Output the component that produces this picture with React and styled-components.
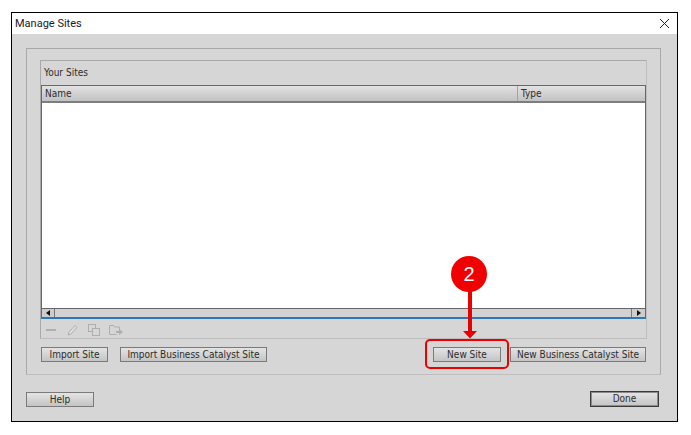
import styled, { createGlobalStyle } from "styled-components";

const GlobalStyle = createGlobalStyle`
  html, body {
    margin: 0;
    background: #fff;
  }
`;

const uiFont = `"DejaVu Sans Condensed", "DejaVu Sans", sans-serif`;

const Page = styled.div`
  position: relative;
  width: 691px;
  height: 435px;
  padding: 12px 0 0 11px;
  box-sizing: border-box;
  overflow: hidden;
`;

const Dialog = styled.div`
  width: 667px;
  height: 410px;
  box-sizing: border-box;
  border: 1px solid #000;
  background: #d6d6d6;
  display: flex;
  flex-direction: column;
  font-family: ${uiFont};
  font-size: 10px;
  color: #2c2c2c;
`;

const TitleBar = styled.div`
  height: 21px;
  flex: none;
  background: #fff;
  display: flex;
  align-items: center;
  justify-content: space-between;
  padding: 0 7px 0 3px;
  font-family: Roboto, sans-serif;
  font-size: 11px;
  color: #1a1a2a;
`;

const Content = styled.div`
  flex: 1;
  display: flex;
  flex-direction: column;
  padding: 14px 16px 0 14px;
`;

const OuterFrame = styled.div`
  height: 327px;
  box-sizing: border-box;
  border: 1px solid #a9a9a9;
  border-bottom-color: #bdbdbd;
  padding: 11px 13px 0 13px;
`;

const SitesPanel = styled.div`
  height: 279px;
  box-sizing: border-box;
  border: 1px solid #a9a9a9;
  border-bottom-color: #bdbdbd;
  border-right-color: #bdbdbd;
  display: flex;
  flex-direction: column;
`;

const PanelTitle = styled.div`
  height: 24px;
  flex: none;
  box-sizing: border-box;
  display: flex;
  align-items: center;
  padding: 0 0 2px 3px;
`;

const Table = styled.div`
  height: 234px;
  flex: none;
  box-sizing: border-box;
  border: 1px solid #2a78b8;
  border-bottom-width: 2px;
  background: #fff;
  display: flex;
  flex-direction: column;
`;

const HeaderRow = styled.div`
  height: 17px;
  flex: none;
  box-sizing: border-box;
  border-bottom: 2px solid #7d7d7d;
  background: linear-gradient(#e2e2e2, #c2c2c2);
  display: flex;
`;

const HeaderCell = styled.div`
  width: ${(p) => p.$width}px;
  flex: none;
  display: flex;
  align-items: center;
  padding-left: 3px;
  box-sizing: border-box;
  ${(p) => p.$divider && "border-left: 1px solid #a4a4a4;"}
`;

const Rows = styled.div`
  flex: 1;
`;

const ScrollBar = styled.div`
  height: 9px;
  flex: none;
  box-sizing: border-box;
  border-top: 1px solid #666;
  background: #d2d2d2;
  display: flex;
  justify-content: space-between;
`;

const ScrollButton = styled.div`
  width: ${(p) => (p.$side === "left" ? 13 : 14)}px;
  box-sizing: border-box;
  background: #cdcdcd;
  border-${(p) => (p.$side === "left" ? "right" : "left")}: 1px solid #777;
  display: flex;
  align-items: center;
  justify-content: center;
`;

const Arrow = styled.span`
  width: 0;
  height: 0;
  border-top: 3px solid transparent;
  border-bottom: 3px solid transparent;
  border-${(p) => (p.$side === "left" ? "right" : "left")}: 4px solid #111;
`;

const IconBar = styled.div`
  flex: 1;
  display: flex;
  align-items: center;
  gap: 9px;
  padding: 2px 0 0 5px;
  color: #aeaeae;
`;

const ButtonRow = styled.div`
  display: flex;
  justify-content: space-between;
  margin: 8px 1px 0 1px;
`;

const ButtonGroup = styled.div`
  display: flex;
  gap: ${(p) => p.$gap}px;
`;

const Button = styled.button`
  width: ${(p) => p.$width}px;
  height: ${(p) => (p.$primary ? 16 : 15)}px;
  padding: 0;
  box-sizing: border-box;
  white-space: nowrap;
  border: 1px solid ${(p) => (p.$primary ? "#3a3a3a" : "#7a7a7a")};
  box-shadow: ${(p) => (p.$primary ? "inset 0 0 0 1px #8c8c8c" : "none")};
  background: linear-gradient(#e4e4e4, #c4c4c4);
  font-family: ${uiFont};
  font-size: 10px;
  line-height: 1;
  color: #2c2c2c;
`;

const Footer = styled.div`
  display: flex;
  justify-content: space-between;
  align-items: flex-end;
  margin: 16px 2px 0 0;
`;

const CalloutBubble = styled.div`
  position: absolute;
  left: 451px;
  top: 256px;
  width: 36px;
  height: 36px;
  border-radius: 50%;
  background: #f00000;
  color: #fff;
  font-family: "Liberation Sans", sans-serif;
  font-size: 20px;
  display: flex;
  align-items: center;
  justify-content: center;
`;

const CalloutArrow = styled.svg`
  position: absolute;
  left: 463px;
  top: 290px;
`;

const CalloutBox = styled.div`
  position: absolute;
  left: 425px;
  top: 339px;
  width: 84px;
  height: 30px;
  box-sizing: border-box;
  border: 2px solid #ee0000;
  border-radius: 5px;
`;

const CloseIcon = () => (
  <svg width="11" height="11" viewBox="0 0 11 11">
    <path d="M1 1l9 9M10 1l-9 9" stroke="#222" strokeWidth="1" fill="none" />
  </svg>
);

const RemoveIcon = () => (
  <svg width="12" height="12" viewBox="0 0 12 12">
    <rect x="0" y="5" width="10" height="2" fill="currentColor" />
  </svg>
);

const EditIcon = () => (
  <svg width="12" height="12" viewBox="0 0 12 12">
    <path d="M1 11l1-3 6-6.500 2 2-6 6.500z" fill="#dedede" stroke="currentColor" />
  </svg>
);

const DuplicateIcon = () => (
  <svg width="12" height="12" viewBox="0 0 12 12">
    <rect x="0.5" y="0.5" width="7" height="7" fill="none" stroke="currentColor" />
    <rect x="4.5" y="4.500" width="7" height="7" fill="#d6d6d6" stroke="currentColor" />
  </svg>
);

const ExportIcon = () => (
  <svg width="14" height="12" viewBox="0 0 14 12">
    <path d="M.5 10.500v-9h4l1 1.500h5v3M.5 10.500h7" fill="none" stroke="currentColor" />
    <path d="M7 7h3V5l4 3-4 3V9H7z" fill="currentColor" />
  </svg>
);

const App = () => (
  <Page>
    <GlobalStyle />
    <Dialog>
      <TitleBar>
        Manage Sites
        <CloseIcon />
      </TitleBar>
      <Content>
        <OuterFrame>
          <SitesPanel>
            <PanelTitle>Your Sites</PanelTitle>
            <Table>
              <HeaderRow>
                <HeaderCell $width={475}>Name</HeaderCell>
                <HeaderCell $width={128} $divider>Type</HeaderCell>
              </HeaderRow>
              <Rows />
              <ScrollBar>
                <ScrollButton $side="left"><Arrow $side="left" /></ScrollButton>
                <ScrollButton $side="right"><Arrow $side="right" /></ScrollButton>
              </ScrollBar>
            </Table>
            <IconBar>
              <RemoveIcon />
              <EditIcon />
              <DuplicateIcon />
              <ExportIcon />
            </IconBar>
          </SitesPanel>
          <ButtonRow>
            <ButtonGroup $gap={12}>
              <Button $width={67}>Import Site</Button>
              <Button $width={147}>Import Business Catalyst Site</Button>
            </ButtonGroup>
            <ButtonGroup $gap={9}>
              <Button $width={68}>New Site</Button>
              <Button $width={136}>New Business Catalyst Site</Button>
            </ButtonGroup>
          </ButtonRow>
        </OuterFrame>
        <Footer>
          <Button $width={68}>Help</Button>
          <Button $width={69} $primary>Done</Button>
        </Footer>
      </Content>
    </Dialog>
    <CalloutBubble>2</CalloutBubble>
    <CalloutArrow width="14" height="49" viewBox="0 0 14 49">
      <path d="M5 0h4v41h5l-7 7.500-7-7.500h5z" fill="#e80000" />
    </CalloutArrow>
    <CalloutBox />
  </Page>
);

export default App;
